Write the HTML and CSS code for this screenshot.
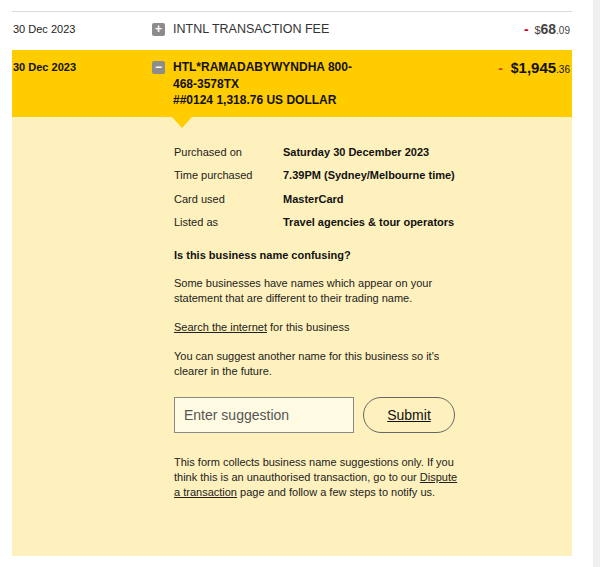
FILE: index.html
```html
<!DOCTYPE html>
<html lang="en">
<head>
    <meta charset="UTF-8">
    <meta name="viewport" content="width=device-width, initial-scale=1.0">
    <title>Transactions</title>
    <link rel="stylesheet" href="styles.css">
</head>
<body>
    <div class="page">
        <div class="statement">
            <div class="txn">
                <div class="txn-date">30 Dec 2023</div>
                <div class="txn-desc">
                    <span class="toggle">+</span>
                    <span class="txn-name">INTNL TRANSACTION FEE</span>
                </div>
                <div class="txn-amt">
                    <span class="minus">-</span>
                    <span class="cur">$</span><span class="dollars">68</span><span class="cents">.09</span>
                </div>
            </div>

            <div class="txn open">
                <div class="txn-date">30 Dec 2023</div>
                <div class="txn-desc">
                    <span class="toggle">&minus;</span>
                    <span class="txn-name">HTL*RAMADABYWYNDHA 800-<br>468-3578TX<br>##0124 1,318.76 US DOLLAR</span>
                </div>
                <div class="txn-amt">
                    <span class="minus">-</span>
                    <span class="cur">$</span><span class="dollars">1,945</span><span class="cents">.36</span>
                </div>
            </div>

            <div class="details">
                <span class="pointer"></span>
                <div class="details-body">
                    <div class="info">
                        <span>Purchased on</span><b>Saturday 30 December 2023</b>
                        <span>Time purchased</span><b>7.39PM (Sydney/Melbourne time)</b>
                        <span>Card used</span><b>MasterCard</b>
                        <span>Listed as</span><b>Travel agencies &amp; tour operators</b>
                    </div>

                    <h3>Is this business name confusing?</h3>
                    <p>Some businesses have names which appear on your statement that are different to their trading name.</p>
                    <p><a href="#">Search the internet</a> for this business</p>
                    <p>You can suggest another name for this business so it's clearer in the future.</p>

                    <form class="suggest" id="suggestForm">
                        <input type="text" placeholder="Enter suggestion">
                        <button type="submit">Submit</button>
                    </form>

                    <p class="note">This form collects business name suggestions only. If you think this is an unauthorised transaction, go to our <a href="#">Dispute a transaction</a> page and follow a few steps to notify us.</p>
                </div>
            </div>
        </div>
        <div class="scroll-strip"></div>
    </div>
</body>
</html>
```

FILE: styles.css
```css
body {
    margin: 0;
    font-family: "Liberation Sans", Arial, sans-serif;
    color: #222;
    background-color: #fff;
}
.page {
    display: flex;
    min-height: 567px;
}
.statement {
    width: 560px;
    margin-left: 12px;
    margin-top: 11px;
    border-top: 1px solid #dcdcdc;
}
.scroll-strip {
    width: 7px;
    margin-left: auto;
    background-color: #f0f0f0;
}

/* transaction rows */
.txn {
    display: flex;
    align-items: flex-start;
    height: 38px;
    box-sizing: border-box;
    padding: 9px 2px 0 1px;
}
.txn-date {
    width: 139px;
    font-size: 11px;
    line-height: 17px;
}
.txn-desc {
    display: flex;
    align-items: flex-start;
    flex: 1;
}
.toggle {
    width: 13px;
    height: 13px;
    margin-top: 2px;
    margin-right: 8px;
    border-radius: 2px;
    background-color: #8c8c8c;
    color: #fff;
    font-size: 12px;
    font-weight: bold;
    line-height: 13px;
    text-align: center;
}
.txn-name {
    font-size: 12.5px;
    line-height: 17px;
    color: #333;
}
.txn-amt {
    font-size: 10px;
    line-height: 17px;
    color: #444;
    white-space: nowrap;
}
.txn-amt .minus {
    color: #d0021b;
    font-size: 14px;
    font-weight: bold;
    margin-right: 3px;
}
.txn-amt .cur {
    font-size: 11px;
}
.txn-amt .dollars {
    font-size: 14px;
    font-weight: bold;
}

.txn.open {
    height: 67px;
    padding-top: 9px;
    background-color: #ffcc00;
}
.txn.open .txn-date {
    font-weight: bold;
    color: #111;
}
.txn.open .txn-name {
    font-size: 12px;
    line-height: 16.5px;
    font-weight: bold;
    color: #111;
}
.txn.open .txn-amt {
    color: #111;
}
.txn.open .txn-amt .minus {
    color: #e03a12;
    margin-right: 5px;
}
.txn.open .txn-amt .cur {
    font-weight: bold;
    font-size: 14px;
}
.txn.open .txn-amt .dollars {
    font-size: 15px;
}

/* expanded details */
.details {
    position: relative;
    background-color: #fef1bd;
    padding: 24px 0 56px 162px;
}
.pointer {
    position: absolute;
    top: 0;
    left: 160px;
    border-left: 10px solid transparent;
    border-right: 10px solid transparent;
    border-top: 11px solid #ffcc00;
}
.details-body {
    width: 285px;
    font-size: 11px;
    line-height: 15px;
    color: #222;
}
.info {
    display: grid;
    grid-template-columns: 109px auto;
    grid-auto-rows: 23.3px;
    align-items: center;
    white-space: nowrap;
}
.info b {
    color: #111;
}
h3 {
    font-size: 11px;
    line-height: 15px;
    margin: 14px 0 13px;
    color: #111;
}
p {
    margin: 0 0 14px;
}
a {
    color: #222;
}
.suggest {
    display: flex;
    gap: 9px;
    margin: 18px 0 22px;
}
.suggest input[type="text"] {
    width: 180px;
    height: 36px;
    box-sizing: border-box;
    padding: 0 9px;
    border: 1px solid #8a8a8a;
    background-color: #fffbe3;
    font-family: inherit;
    font-size: 14px;
    color: #333;
}
.suggest input::placeholder {
    color: #555;
}
.suggest button {
    width: 92px;
    height: 36px;
    border: 1px solid #666;
    border-radius: 18px;
    background: none;
    font-family: inherit;
    font-size: 14px;
    color: #111;
    text-decoration: underline;
    cursor: pointer;
}
.note {
    margin: 0;
}
```
